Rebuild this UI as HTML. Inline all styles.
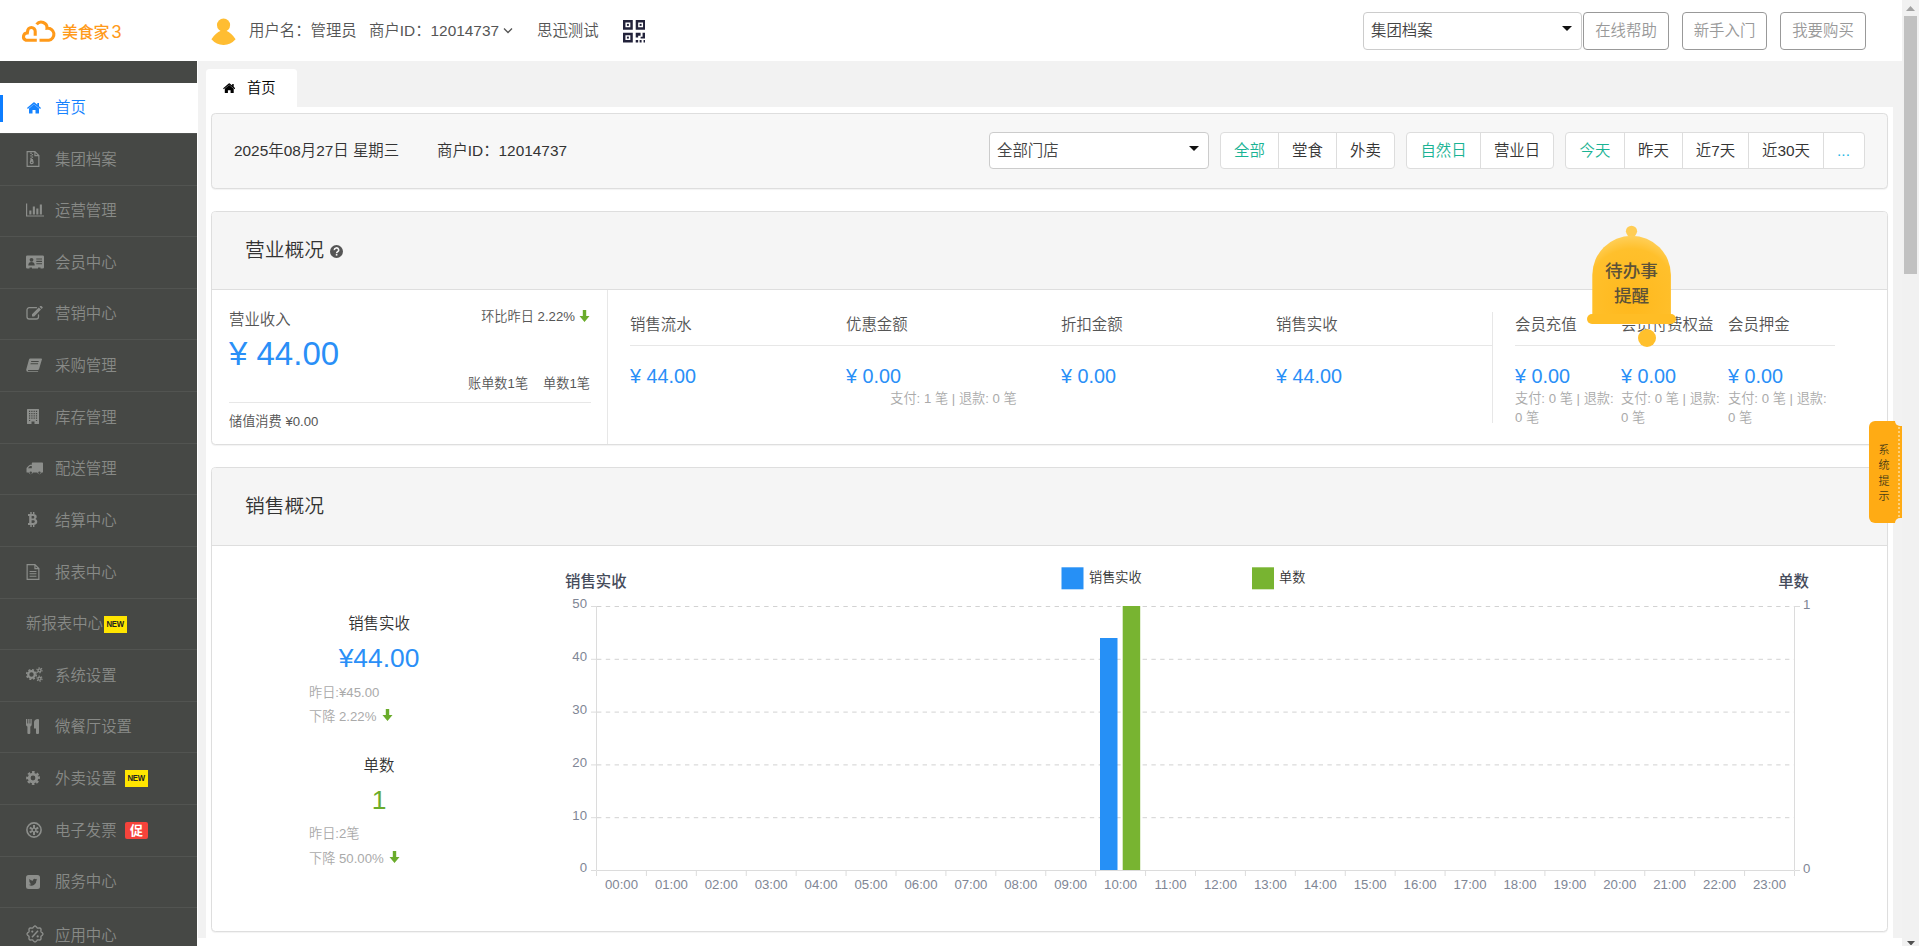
<!DOCTYPE html>
<html lang="zh-CN">
<head>
<meta charset="utf-8">
<title>美食家3</title>
<style>
*{box-sizing:border-box;margin:0;padding:0}
html,body{width:1919px;height:946px;overflow:hidden;background:#f2f2f2}
body{font-family:"Liberation Sans","Noto Sans CJK SC",sans-serif;font-size:14px;font-weight:350;color:#333;position:relative}
.abs{position:absolute}
svg{display:block}
/* header */
#hdr{position:absolute;left:0;top:0;width:1902px;height:61px;background:#fff}
#hdr .t{position:absolute;top:19.500px;height:22px;line-height:22px;font-size:15.4px;color:#555;white-space:nowrap}
.sel{position:absolute;border:1px solid #ccc;border-radius:4px;background:#fff;font-size:15.4px;color:#444;padding-left:7px;white-space:nowrap}
.sel:after{content:"";position:absolute;right:9px;top:13px;border:5px solid transparent;border-top:5px solid #111;border-bottom:0}
.hbtn{position:absolute;top:12px;height:38px;line-height:36px;border:1px solid #999;border-radius:4px;color:#999;font-size:15.4px;text-align:center;background:#fff}
/* sidebar */
#side{position:absolute;left:0;top:61px;width:197px;height:885px;background:#464845;overflow:hidden}
#side .it{position:absolute;left:0;width:197px;height:52px;border-top:1px solid #525451;color:#888a87;font-size:15.4px;line-height:51px;white-space:nowrap}
#side .it .ic{position:absolute;left:26px;top:17px;width:17px;height:17px}
#side .it .tx{position:absolute;left:55px;top:0}
#side .it.act{background:#fff;color:#1583ff;border-top:0;height:50px;line-height:50px}
.badge{position:absolute;top:17px;width:23px;height:17px;line-height:17px;font-size:9px;text-align:center;background:#ffe500;color:#222;font-weight:bold;letter-spacing:-.3px}
.badge i{display:inline-block;font-style:normal;transform:scaleX(.86)}
.badge.cu{background:#f5433b;color:#fff;font-size:13px;border-radius:2px;letter-spacing:0}
/* scrollbar */
#sb{position:absolute;left:1902px;top:0;width:17px;height:946px;background:#f1f1f1}
#sb .th{position:absolute;left:2px;top:16px;width:13px;height:258px;background:#c1c1c1}
/* content */
#white{position:absolute;left:206px;top:107px;width:1687px;height:839px;background:#fff}
#tab{position:absolute;left:206px;top:69px;width:91px;height:39px;background:#fff;border-radius:3.500px 3.500px 0 0;font-size:14.300px;color:#000;line-height:39px}
.panel{position:absolute;left:211px;width:1677px;border:1px solid #dedede;border-radius:4.400px;background:#fff;overflow:hidden;box-shadow:0 1px 1px rgba(0,0,0,.05)}
.phead{position:absolute;left:0;top:0;width:100%;height:78px;background:#f5f5f5;border-bottom:1px solid #dedede}
.phead .ttl{position:absolute;left:33px;top:23px;font-size:19.8px;line-height:30px;color:#333;white-space:nowrap}
.bg{position:absolute;top:132px;height:37px;border:1px solid #ddd;border-radius:4px;background:#fff;display:flex;overflow:hidden}
.bg span{display:block;height:35px;line-height:35px;text-align:center;font-size:15.4px;color:#333;border-left:1px solid #ddd}
.bg span:first-child{border-left:0}
.bg span.on{color:#1ab394}
.lbl{position:absolute;font-size:15.4px;color:#555;white-space:nowrap;line-height:20px}
.val{position:absolute;font-size:19.8px;color:#2a8ff7;white-space:nowrap;line-height:26px}
.sub{position:absolute;font-size:13.2px;color:#aaa;line-height:19px;white-space:nowrap}
.hr{position:absolute;height:1px;background:#e7e7e7}
</style>
</head>
<body>

<!-- HEADER -->
<div id="hdr">
  <svg class="abs" style="left:0;top:0" width="60" height="61" viewBox="0 0 60 61" fill="none" stroke="#ff9a1a" stroke-width="3.100"><path d="M36.800 40.200H26A3.700 3.700 0 0 1 27.300 33L27.600 31.300A3.700 3.700 0 0 1 35.200 31.300V35.800"/><path d="M36.600 24.400A5.800 5.800 0 0 1 47 28.300A6 6 0 1 1 48.800 40.200H39.500"/></svg>
  <div class="abs" style="left:62px;top:20px;font-size:16px;line-height:24px;color:#ff9a1a;font-weight:500;white-space:nowrap;letter-spacing:-.2px">美食家<span style="font-size:18px;margin-left:2px;font-weight:normal">3</span></div>
  <svg class="abs" style="left:210px;top:18px" width="28" height="28" viewBox="0 0 28 28"><circle cx="13.550" cy="7.100" r="6.600" fill="#ffbd32"/><path d="M10.900 12.800Q5.500 15 1.400 21.200Q6.500 27 13.600 26.900Q20.500 27 25.600 21.200Q21.500 15 16.200 12.800z" fill="#ffbd32"/></svg>
  <div class="t" style="left:249px">用户名：管理员</div>
  <div class="t" style="left:369px">商户ID：12014737</div>
  <svg class="abs" style="left:503px;top:27px" width="10" height="7" viewBox="0 0 10 7"><path d="M1 1.500l4 4 4-4" fill="none" stroke="#555" stroke-width="1.300"/></svg>
  <div class="t" style="left:537px">思迅测试</div>
  <svg class="abs" style="left:622.500px;top:20px" width="22.500" height="22.500" viewBox="0 0 23 23" fill="#22223a"><path d="M0 0h10v10H0zM2.500 2.500v5h5v-5zM13 0h10v10H13zM15.500 2.500v5h5v-5zM0 13h10v10H0zM2.500 15.500v5h5v-5z" fill-rule="evenodd"/><rect x="4" y="4" width="2" height="2"/><rect x="17" y="4" width="2" height="2"/><rect x="4" y="17" width="2" height="2"/><path d="M13 13h5v3h-2.500v2H13zM20 13h3v6h-5v-2h2zM13 20.500h2.500V23H13zM17 20.500h2V23h-2zM21 20.500h2V23h-2z"/></svg>
  <div class="sel" style="left:1363px;top:12px;width:219px;height:38px;line-height:36px">集团档案</div>
  <div class="hbtn" style="left:1583px;width:86px">在线帮助</div>
  <div class="hbtn" style="left:1682px;width:85px">新手入门</div>
  <div class="hbtn" style="left:1780px;width:86px">我要购买</div>
</div>

<!-- SIDEBAR -->
<div id="side">
  <div class="it act" style="top:22px"><div class="abs" style="left:0;top:12px;width:3px;height:27px;background:#0d7dff"></div>
    <svg class="ic" style="left:27px;top:19px;width:14px;height:12px" viewBox="0 0 14 12"><path d="M7 2.300L2 6.500V11a.5.500 0 0 0 .5.500H5.500V8h3v3.500h3A.5.500 0 0 0 12 11V6.500zM13.800 5.800l-1.800-1.500V1h-1.700v1.800L7.600.5a1 1 0 0 0-1.200 0L.2 5.800a.3.300 0 0 0 0 .4l.5.600a.3.300 0 0 0 .4 0L7 1.900l5.900 4.900a.3.300 0 0 0 .4 0l.5-.6a.3.300 0 0 0 0-.4z" fill="#1583ff"/></svg>
    <span class="tx">首页</span></div>
  <div class="it" style="top:72px;height:52px;line-height:51px"><svg class="abs" style="left:26px;top:17px" width="14" height="16" viewBox="0 0 13 15"><path d="M1 .6h7.300l3.700 3.700V14.400H1z M8.300 .6v3.700H12" fill="none" stroke="#8c8e8b" stroke-width="1.100"/><path d="M4 1.500h1.300v1.200H4zM5.300 2.700h1.300v1.200H5.300zM4 3.900h1.300v1.200H4zM5.300 5.100h1.300v1.200H5.300zM4 6.300h1.300v1.200H4z" fill="#8c8e8b"/><path d="M4.200 7.600h2.200l.8 3.200a1.900 1.700 0 0 1-3.800 0zM4.500 10.600a.8.600 0 0 0 1.600 0 .8.600 0 0 0-1.600 0z" fill="#8c8e8b" fill-rule="evenodd"/></svg><span class="tx">集团档案</span></div>
  <div class="it" style="top:124px;height:51px;line-height:50px"><svg class="abs" style="left:26px;top:17px" width="18" height="14" viewBox="0 0 18 14"><path d="M.6 .5V13H18" fill="none" stroke="#8c8e8b" stroke-width="1.200"/><path d="M3.300 7.500h2.100V11.500H3.300zM6.800 3.500h2.100v8H6.800zM10.300 5.500h2.100v6h-2.100zM13.800 1.500h2.100v10h-2.100z" fill="#8c8e8b"/></svg><span class="tx">运营管理</span></div>
  <div class="it" style="top:175px;height:52px;line-height:51px"><svg class="abs" style="left:26px;top:18px" width="18" height="14" viewBox="0 0 18 14"><path d="M1.300 .5h15.400A1.300 1.300 0 0 1 18 1.800v10.400a1.300 1.300 0 0 1-1.300 1.300H14.500v-1h-2.500v1H6v-1H3.500v1H1.300A1.300 1.300 0 0 1 0 12.200V1.800A1.300 1.300 0 0 1 1.300 .5z" fill="#8c8e8b"/><circle cx="5.500" cy="4.800" r="1.900" fill="#464845"/><path d="M2.300 10.500c0-2.500 1.200-3.500 3.200-3.500s3.200 1 3.200 3.500z" fill="#464845"/><path d="M10.300 3.400h5.700v1.100h-5.700zM10.300 5.800h5.700v1.100h-5.700zM10.300 8.200h5.700v1.100h-5.700z" fill="#464845"/></svg><span class="tx">会员中心</span></div>
  <div class="it" style="top:227px;height:51px;line-height:50px"><svg class="abs" style="left:26px;top:17px" width="17" height="14" viewBox="0 0 17 14"><path d="M10.500 1.700H3.200A2.200 2.200 0 0 0 1 3.900v6.900A2.200 2.200 0 0 0 3.200 13h7.100a2.200 2.200 0 0 0 2.200-2.200V9" fill="none" stroke="#8c8e8b" stroke-width="1.300" stroke-linecap="round"/><path d="M6 8.200L12.800 1.400l2.200 2.200L8.200 10.400H6zM13.500 .7l.8-.8a.7.700 0 0 1 1 0l1.200 1.200a.7.700 0 0 1 0 1l-.8.800z" fill="#8c8e8b"/></svg><span class="tx">营销中心</span></div>
  <div class="it" style="top:278px;height:52px;line-height:51px"><svg class="abs" style="left:26px;top:18px" width="16" height="14" viewBox="0 0 16 14"><path d="M4.200 .5H15.200a.8.800 0 0 1 .7 1.100L13 11.200a1.200 1.200 0 0 1-1.100.8H2.500c-.5 0-.7.300-.5.700.2.400.6.500 1 .5h9.300l-.4.800H2.500A2.300 2.300 0 0 1 .3 11.200L3 1.400A1.300 1.300 0 0 1 4.200 .5zM5.300 3l-.3 1h7.500l.3-1zM4.700 5.200l-.3 1h7.500l.3-1z" fill="#8c8e8b" fill-rule="evenodd"/></svg><span class="tx">采购管理</span></div>
  <div class="it" style="top:330px;height:52px;line-height:51px"><svg class="abs" style="left:27px;top:17px" width="12" height="15" viewBox="0 0 12 15"><path d="M.5 0h11a.5.500 0 0 1 .5.500V14.500a.5.500 0 0 1-.5.500H7.500v-2.500h-3V15H.5a.5.500 0 0 1-.5-.5V.5A.5.500 0 0 1 .5 0z" fill="#8c8e8b"/><path d="M2 1.700h1.200v1.200H2zM4.300 1.700h1.200v1.200H4.300zM6.600 1.700h1.200v1.200H6.600zM8.900 1.700h1.200v1.200H8.900zM2 4h1.200v1.200H2zM4.300 4h1.200v1.200H4.300zM6.600 4h1.200v1.200H6.600zM8.900 4h1.200v1.200H8.900zM2 6.300h1.200v1.200H2zM4.300 6.300h1.200v1.200H4.300zM6.600 6.300h1.200v1.200H6.600zM8.900 6.300h1.200v1.200H8.900zM2 8.600h1.200v1.200H2zM4.300 8.600h1.200v1.200H4.300zM6.600 8.600h1.200v1.200H6.600zM8.900 8.600h1.200v1.200H8.900zM2 10.900h1.200v1.200H2zM8.900 10.900h1.200v1.200H8.900z" fill="#464845"/></svg><span class="tx">库存管理</span></div>
  <div class="it" style="top:382px;height:51px;line-height:50px"><svg class="abs" style="left:26px;top:18px" width="17" height="13" viewBox="0 0 17 13"><path d="M6.500 .5H16.300a.7.700 0 0 1 .7.700V10a.6.600 0 0 1-.6.600H15.600a2.200 2.200 0 0 1-4.300 0H6.900a2.200 2.200 0 0 1-4.300 0H1.100A.6.600 0 0 1 .5 10V6.500a1.500 1.500 0 0 1 .4-1L3.200 3.200a1.300 1.300 0 0 1 .9-.4H5.800V1.200A.7.700 0 0 1 6.500 .5zM2 6.300H5.800V4H4.300a.5.500 0 0 0-.3.100L2.100 6a.4.400 0 0 0-.1.300z" fill="#8c8e8b" fill-rule="evenodd"/><circle cx="4.750" cy="10.800" r="1.250" fill="#464845"/><circle cx="13.450" cy="10.800" r="1.250" fill="#464845"/><circle cx="4.750" cy="10.800" r="1.200" fill="#8c8e8b" opacity=".0"/></svg><span class="tx">配送管理</span></div>
  <div class="it" style="top:433px;height:52px;line-height:51px"><svg class="abs" style="left:27px;top:17px" width="11" height="15" viewBox="0 0 11 15"><path d="M1 2h5.200c2.300 0 3.500 1 3.500 2.700 0 1.200-.6 2-1.600 2.400 1.400.3 2.200 1.300 2.200 2.700 0 2-1.400 3.200-3.900 3.200H1v-2h1.200V4H1zM4.600 4v2.500h1.300c.9 0 1.400-.5 1.400-1.300S6.800 4 5.900 4zM4.600 8.300V11h1.600c1 0 1.600-.5 1.600-1.400s-.6-1.300-1.600-1.300z" fill="#8c8e8b" fill-rule="evenodd"/><path d="M3.300 0h1.400v2.500H3.300zM6 0h1.400v2.500H6zM3.300 12.500h1.400V15H3.300zM6 12.500h1.400V15H6z" fill="#8c8e8b"/></svg><span class="tx">结算中心</span></div>
  <div class="it" style="top:485px;height:52px;line-height:51px"><svg class="abs" style="left:26px;top:17px" width="14" height="16" viewBox="0 0 13 15"><path d="M1 .6h7.300l3.700 3.700V14.400H1z M8.300 .6v3.700H12" fill="none" stroke="#8c8e8b" stroke-width="1.100"/><path d="M3.300 6.500h6.400v1H3.300zM3.300 8.700h6.400v1H3.300zM3.300 10.900h6.400v1H3.300z" fill="#8c8e8b"/></svg><span class="tx">报表中心</span></div>
  <div class="it" style="top:537px;height:51px;line-height:50px"><span class="tx" style="left:26px">新报表中心</span><span class="badge" style="left:104px"><i>NEW</i></span></div>
  <div class="it" style="top:588px;height:52px;line-height:51px"><svg class="abs" style="left:26px;top:17px" width="17" height="15" viewBox="0 0 17 15"><circle cx="5.500" cy="7.500" r="3.300" fill="none" stroke="#8c8e8b" stroke-width="2.200"/><circle cx="5.500" cy="7.500" r="4.800" fill="none" stroke="#8c8e8b" stroke-width="1.600" stroke-dasharray="2 1.770"/><circle cx="13.500" cy="3.300" r="1.500" fill="none" stroke="#8c8e8b" stroke-width="1.300"/><circle cx="13.500" cy="3.300" r="2.600" fill="none" stroke="#8c8e8b" stroke-width="1.100" stroke-dasharray="1.300 1.420"/><circle cx="13.500" cy="11.700" r="1.500" fill="none" stroke="#8c8e8b" stroke-width="1.300"/><circle cx="13.500" cy="11.700" r="2.600" fill="none" stroke="#8c8e8b" stroke-width="1.100" stroke-dasharray="1.300 1.420"/></svg><span class="tx">系统设置</span></div>
  <div class="it" style="top:640px;height:51px;line-height:50px"><svg class="abs" style="left:26px;top:17px" width="13" height="15" viewBox="0 0 13 15"><path d="M0 0h1.300v4.500h.9V0h1.300v4.500h.9V0h1.300v5.500c0 1-.6 1.600-1.400 2V14a1 1 0 0 1-1 1h-.9a1 1 0 0 1-1-1V7.500C.6 7.100 0 6.500 0 5.500zM12 0a1 1 0 0 1 1 1V14a1 1 0 0 1-1 1h-1a1 1 0 0 1-1-1V9.500H8.500a.5.500 0 0 1-.5-.5V3.500C8 1.500 9.500 0 12 0z" fill="#8c8e8b"/></svg><span class="tx">微餐厅设置</span></div>
  <div class="it" style="top:691px;height:52px;line-height:51px"><svg class="abs" style="left:26px;top:18px" width="14" height="14" viewBox="0 0 14 14"><circle cx="7" cy="7" r="3.800" fill="none" stroke="#8c8e8b" stroke-width="2.800"/><circle cx="7" cy="7" r="5.800" fill="none" stroke="#8c8e8b" stroke-width="2.200" stroke-dasharray="2.500 2.055" transform="rotate(-16 7 7)"/></svg><span class="tx">外卖设置</span><span class="badge" style="left:125px"><i>NEW</i></span></div>
  <div class="it" style="top:743px;height:52px;line-height:51px"><svg class="abs" style="left:26px;top:17px" width="16" height="16" viewBox="0 0 16 16"><circle cx="8" cy="8" r="7.100" fill="none" stroke="#8c8e8b" stroke-width="1.600"/><path d="M8 3.100v9.800M3.750 5.550l8.500 4.900M12.250 5.550l-8.500 4.900" stroke="#8c8e8b" stroke-width="2" fill="none"/><circle cx="8" cy="8" r="1.200" fill="#464845"/></svg><span class="tx">电子发票</span><span class="badge cu" style="left:125px">促</span></div>
  <div class="it" style="top:795px;height:51px;line-height:50px"><svg class="abs" style="left:26px;top:18px" width="14" height="14" viewBox="0 0 14 14"><rect x="0" y="0" width="14" height="14" rx="2.500" fill="#8c8e8b"/><path d="M11.300 4.500c-.3.150-.65.250-1 .3.350-.2.650-.55.750-.95-.35.200-.7.350-1.100.4A1.750 1.750 0 0 0 6.950 5.800 4.900 4.900 0 0 1 3.400 4 1.750 1.750 0 0 0 3.950 6.300c-.3 0-.55-.1-.8-.2 0 .85.600 1.550 1.400 1.700-.25.050-.5.100-.8.050.2.700.85 1.200 1.600 1.200A3.500 3.500 0 0 1 2.800 9.800 4.900 4.900 0 0 0 10.400 5.500c.35-.25.650-.6.900-1z" fill="#464845"/></svg><span class="tx">服务中心</span></div>
  <div class="it" style="top:846px;height:52px;line-height:55px"><svg class="abs" style="left:26px;top:17px" width="18" height="18" viewBox="0 0 18 18"><path d="M9.0 1.0L9.5 1.2L10.0 1.5L10.4 1.9L10.8 2.4L11.1 2.8L11.5 3.0L11.9 3.1L12.4 3.1L13.0 3.0L13.6 3.0L14.2 3.1L14.6 3.4L14.9 3.8L15.0 4.4L15.0 5.0L14.9 5.6L14.9 6.1L15.0 6.5L15.2 6.9L15.6 7.2L16.1 7.6L16.5 8.0L16.8 8.5L16.9 9.0L16.8 9.5L16.5 10.0L16.1 10.4L15.6 10.8L15.2 11.1L15.0 11.5L14.9 11.9L14.9 12.4L15.0 13.0L15.0 13.6L14.9 14.2L14.6 14.6L14.2 14.9L13.6 15.0L13.0 15.0L12.4 14.9L11.9 14.9L11.5 15.0L11.1 15.2L10.8 15.6L10.4 16.1L10.0 16.5L9.5 16.8L9.0 16.9L8.5 16.8L8.0 16.5L7.6 16.1L7.2 15.6L6.9 15.2L6.5 15.0L6.1 14.9L5.6 14.9L5.0 15.0L4.4 15.0L3.8 14.9L3.4 14.6L3.1 14.2L3.0 13.6L3.0 13.0L3.1 12.4L3.1 11.9L3.0 11.5L2.8 11.1L2.4 10.8L1.9 10.4L1.5 10.0L1.2 9.5L1.0 9.0L1.2 8.5L1.5 8.0L1.9 7.6L2.4 7.2L2.8 6.9L3.0 6.5L3.1 6.1L3.1 5.6L3.0 5.0L3.0 4.4L3.1 3.8L3.4 3.4L3.8 3.1L4.4 3.0L5.0 3.0L5.6 3.1L6.1 3.1L6.5 3.0L6.9 2.8L7.2 2.4L7.6 1.9L8.0 1.5L8.5 1.2z" fill="none" stroke="#8c8e8b" stroke-width="1.400" stroke-linejoin="round"/><path d="M6 12.200l6-6.400" stroke="#8c8e8b" stroke-width="1.500" fill="none"/><circle cx="6.300" cy="6.600" r="1.100" fill="#8c8e8b"/><circle cx="11.700" cy="11.400" r="1.100" fill="#8c8e8b"/></svg><span class="tx">应用中心</span></div>
</div>

<!-- SCROLLBAR -->
<div id="sb"><div class="th"></div>
  <svg class="abs" style="left:4px;top:6px" width="9" height="5" viewBox="0 0 9 5"><path d="M0 5L4.500 0 9 5z" fill="#a3a3a3"/></svg>
  <svg class="abs" style="left:4.500px;top:940.500px" width="8" height="4.500" viewBox="0 0 9 5"><path d="M0 0L4.500 5 9 0z" fill="#505050"/></svg>
</div>

<!-- TAB + WHITE AREA -->
<div id="tab">
  <svg class="abs" style="left:16.500px;top:13.700px" width="12.500" height="10.700" viewBox="0 0 14 12"><path d="M7 2.300L2 6.500V11a.5.500 0 0 0 .5.500H5.500V8h3v3.500h3A.5.500 0 0 0 12 11V6.500zM13.800 5.800l-1.800-1.500V1h-1.700v1.800L7.600.5a1 1 0 0 0-1.200 0L.2 5.800a.3.300 0 0 0 0 .4l.5.600a.3.300 0 0 0 .4 0L7 1.900l5.900 4.900a.3.300 0 0 0 .4 0l.5-.6a.3.300 0 0 0 0-.4z" fill="#000"/></svg>
  <span class="abs" style="left:41px;top:0">首页</span>
</div>
<div id="white"></div>
<div class="abs" style="left:197px;top:938px;width:1705px;height:8px;background:#fff"></div>
<div class="abs" style="left:197px;top:61px;width:1px;height:885px;background:#fff"></div>

<!-- FILTER PANEL -->
<div class="panel" style="top:113px;height:76px;background:#f7f7f7"></div>
<div class="lbl" style="left:234px;top:141px;color:#333">2025年08月27日 星期三</div>
<div class="lbl" style="left:437px;top:141px;color:#333">商户ID：12014737</div>
<div class="sel" style="left:989px;top:132px;width:220px;height:37px;line-height:35px">全部门店</div>
<div class="bg" style="left:1220px;width:175px"><span class="on" style="width:57px">全部</span><span style="width:58px">堂食</span><span style="width:58px">外卖</span></div>
<div class="bg" style="left:1406px;width:148px"><span class="on" style="width:73px">自然日</span><span style="width:73px">营业日</span></div>
<div class="bg" style="left:1565px;width:300px"><span class="on" style="width:58px">今天</span><span style="width:58px">昨天</span><span style="width:66px">近7天</span><span style="width:75px">近30天</span><span style="width:40px;color:#23b7e5">...</span></div>

<!-- OVERVIEW PANEL -->
<div class="panel" style="top:211px;height:234px">
  <div class="phead"><div class="ttl">营业概况</div>
    <svg class="abs" style="left:118px;top:33px" width="13" height="13" viewBox="0 0 13 13"><circle cx="6.500" cy="6.500" r="6.500" fill="#555"/><path d="M4.300 5.100a2.200 2.100 0 1 1 3.300 1.700c-.7.400-1 .7-1 1.400" fill="none" stroke="#f5f5f5" stroke-width="1.600"/><rect x="5.800" y="9" width="1.600" height="1.600" fill="#f5f5f5"/></svg>
  </div>
  <div class="abs" style="left:395px;top:78px;width:1px;height:156px;background:#e7e7e7"></div>
</div>
<div class="lbl" style="left:229px;top:310px">营业收入</div>
<div class="lbl" style="left:380px;top:307px;width:195px;text-align:right;font-size:13.2px">环比昨日 2.22%</div>
<svg class="abs arr" style="left:579px;top:310px" width="11" height="12" viewBox="0 0 11 12"><path d="M3.800 0h3.400v6h3.300L5.500 12 .5 6h3.300z" fill="#6aac2b"/></svg>
<div class="abs" style="left:229px;top:334px;font-size:33px;line-height:40px;color:#2a8ff7;white-space:nowrap">¥ 44.00</div>
<div class="lbl" style="left:380px;top:374px;width:210px;text-align:right;font-size:13.2px">账单数1笔<span style="margin-left:15px">单数1笔</span></div>
<div class="hr" style="left:229px;top:402px;width:362px"></div>
<div class="lbl" style="left:229px;top:412px;font-size:13.2px">储值消费 ¥0.00</div>

<div class="lbl" style="left:630px;top:315px">销售流水</div>
<div class="lbl" style="left:846px;top:315px">优惠金额</div>
<div class="lbl" style="left:1061px;top:315px">折扣金额</div>
<div class="lbl" style="left:1276px;top:315px">销售实收</div>
<div class="hr" style="left:630px;top:345px;width:862px"></div>
<div class="val" style="left:630px;top:363px">¥ 44.00</div>
<div class="val" style="left:846px;top:363px">¥ 0.00</div>
<div class="val" style="left:1061px;top:363px">¥ 0.00</div>
<div class="val" style="left:1276px;top:363px">¥ 44.00</div>
<div class="sub" style="left:846px;top:389px;width:215px;text-align:center">支付: 1 笔 | 退款: 0 笔</div>
<div class="abs" style="left:1492px;top:312px;width:1px;height:111px;background:#e7e7e7"></div>
<div class="lbl" style="left:1515px;top:315px">会员充值</div>
<div class="lbl" style="left:1621px;top:315px">会员付费权益</div>
<div class="lbl" style="left:1728px;top:315px">会员押金</div>
<div class="hr" style="left:1515px;top:345px;width:320px"></div>
<div class="val" style="left:1515px;top:363px">¥ 0.00</div>
<div class="val" style="left:1621px;top:363px">¥ 0.00</div>
<div class="val" style="left:1728px;top:363px">¥ 0.00</div>
<div class="sub" style="left:1515px;top:389px">支付: 0 笔 | 退款:<br>0 笔</div>
<div class="sub" style="left:1621px;top:389px">支付: 0 笔 | 退款:<br>0 笔</div>
<div class="sub" style="left:1728px;top:389px">支付: 0 笔 | 退款:<br>0 笔</div>

<!-- SALES PANEL -->
<div class="panel" style="top:467px;height:465px">
  <div class="phead"><div class="ttl">销售概况</div></div>
</div>


<div class="lbl" style="left:279px;top:614px;width:200px;text-align:center;color:#333">销售实收</div>
<div class="abs" style="left:279px;top:641px;width:200px;text-align:center;font-size:26.4px;line-height:34px;color:#2a8ff7">¥44.00</div>
<div class="sub" style="left:309px;top:683px">昨日:¥45.00</div>
<div class="sub" style="left:309px;top:707px;font-size:13.2px">下降 2.22%</div>
<svg class="abs" style="left:382px;top:709px" width="11" height="12" viewBox="0 0 11 12"><path d="M3.800 0h3.400v6h3.300L5.500 12 .5 6h3.300z" fill="#6aac2b"/></svg>
<div class="lbl" style="left:279px;top:756px;width:200px;text-align:center;color:#333">单数</div>
<div class="abs" style="left:279px;top:783px;width:200px;text-align:center;font-size:26.4px;line-height:34px;color:#6aac2b">1</div>
<div class="sub" style="left:309px;top:824px">昨日:2笔</div>
<div class="sub" style="left:309px;top:849px;font-size:13.2px">下降 50.00%</div>
<svg class="abs" style="left:389px;top:851px" width="11" height="12" viewBox="0 0 11 12"><path d="M3.800 0h3.400v6h3.300L5.500 12 .5 6h3.300z" fill="#6aac2b"/></svg>
<svg class="abs" style="left:0;top:0" width="1902" height="946" viewBox="0 0 1902 946" font-family="Liberation Sans, Noto Sans CJK SC, sans-serif">
<line x1="597" y1="817.7" x2="1794" y2="817.7" stroke="#d2d2d2" stroke-width="1" stroke-dasharray="4.400 4.400"/>
<line x1="597" y1="764.9" x2="1794" y2="764.9" stroke="#d2d2d2" stroke-width="1" stroke-dasharray="4.400 4.400"/>
<line x1="597" y1="712.1" x2="1794" y2="712.1" stroke="#d2d2d2" stroke-width="1" stroke-dasharray="4.400 4.400"/>
<line x1="597" y1="659.3" x2="1794" y2="659.3" stroke="#d2d2d2" stroke-width="1" stroke-dasharray="4.400 4.400"/>
<line x1="597" y1="606.5" x2="1794" y2="606.5" stroke="#d2d2d2" stroke-width="1" stroke-dasharray="4.400 4.400"/>
<path d="M596.5 606V870.5H1794.5V606" fill="none" stroke="#dcdcdc" stroke-width="1"/>
<line x1="591" y1="870.5" x2="596" y2="870.5" stroke="#dcdcdc"/>
<text x="587" y="872.3" font-size="13.200" fill="#808695" text-anchor="end">0</text>
<line x1="591" y1="817.7" x2="596" y2="817.7" stroke="#dcdcdc"/>
<text x="587" y="819.5" font-size="13.200" fill="#808695" text-anchor="end">10</text>
<line x1="591" y1="764.9" x2="596" y2="764.9" stroke="#dcdcdc"/>
<text x="587" y="766.7" font-size="13.200" fill="#808695" text-anchor="end">20</text>
<line x1="591" y1="712.1" x2="596" y2="712.1" stroke="#dcdcdc"/>
<text x="587" y="713.9" font-size="13.200" fill="#808695" text-anchor="end">30</text>
<line x1="591" y1="659.3" x2="596" y2="659.3" stroke="#dcdcdc"/>
<text x="587" y="661.1" font-size="13.200" fill="#808695" text-anchor="end">40</text>
<line x1="591" y1="606.5" x2="596" y2="606.5" stroke="#dcdcdc"/>
<text x="587" y="608.3" font-size="13.200" fill="#808695" text-anchor="end">50</text>
<line x1="1795" y1="606.5" x2="1800" y2="606.5" stroke="#dcdcdc"/>
<text x="1803" y="608.8" font-size="13.200" fill="#808695">1</text>
<line x1="1795" y1="870.5" x2="1800" y2="870.5" stroke="#dcdcdc"/>
<text x="1803" y="872.8" font-size="13.200" fill="#808695">0</text>
<line x1="596.50" y1="871" x2="596.50" y2="876" stroke="#dcdcdc"/>
<line x1="646.42" y1="871" x2="646.42" y2="876" stroke="#dcdcdc"/>
<line x1="696.33" y1="871" x2="696.33" y2="876" stroke="#dcdcdc"/>
<line x1="746.25" y1="871" x2="746.25" y2="876" stroke="#dcdcdc"/>
<line x1="796.17" y1="871" x2="796.17" y2="876" stroke="#dcdcdc"/>
<line x1="846.08" y1="871" x2="846.08" y2="876" stroke="#dcdcdc"/>
<line x1="896.00" y1="871" x2="896.00" y2="876" stroke="#dcdcdc"/>
<line x1="945.92" y1="871" x2="945.92" y2="876" stroke="#dcdcdc"/>
<line x1="995.83" y1="871" x2="995.83" y2="876" stroke="#dcdcdc"/>
<line x1="1045.75" y1="871" x2="1045.75" y2="876" stroke="#dcdcdc"/>
<line x1="1095.67" y1="871" x2="1095.67" y2="876" stroke="#dcdcdc"/>
<line x1="1145.58" y1="871" x2="1145.58" y2="876" stroke="#dcdcdc"/>
<line x1="1195.50" y1="871" x2="1195.50" y2="876" stroke="#dcdcdc"/>
<line x1="1245.42" y1="871" x2="1245.42" y2="876" stroke="#dcdcdc"/>
<line x1="1295.33" y1="871" x2="1295.33" y2="876" stroke="#dcdcdc"/>
<line x1="1345.25" y1="871" x2="1345.25" y2="876" stroke="#dcdcdc"/>
<line x1="1395.17" y1="871" x2="1395.17" y2="876" stroke="#dcdcdc"/>
<line x1="1445.08" y1="871" x2="1445.08" y2="876" stroke="#dcdcdc"/>
<line x1="1495.00" y1="871" x2="1495.00" y2="876" stroke="#dcdcdc"/>
<line x1="1544.92" y1="871" x2="1544.92" y2="876" stroke="#dcdcdc"/>
<line x1="1594.83" y1="871" x2="1594.83" y2="876" stroke="#dcdcdc"/>
<line x1="1644.75" y1="871" x2="1644.75" y2="876" stroke="#dcdcdc"/>
<line x1="1694.67" y1="871" x2="1694.67" y2="876" stroke="#dcdcdc"/>
<line x1="1744.58" y1="871" x2="1744.58" y2="876" stroke="#dcdcdc"/>
<line x1="1794.50" y1="871" x2="1794.50" y2="876" stroke="#dcdcdc"/>
<text x="621.5" y="889" font-size="13.200" fill="#808695" text-anchor="middle">00:00</text>
<text x="671.4" y="889" font-size="13.200" fill="#808695" text-anchor="middle">01:00</text>
<text x="721.3" y="889" font-size="13.200" fill="#808695" text-anchor="middle">02:00</text>
<text x="771.2" y="889" font-size="13.200" fill="#808695" text-anchor="middle">03:00</text>
<text x="821.1" y="889" font-size="13.200" fill="#808695" text-anchor="middle">04:00</text>
<text x="871.0" y="889" font-size="13.200" fill="#808695" text-anchor="middle">05:00</text>
<text x="921.0" y="889" font-size="13.200" fill="#808695" text-anchor="middle">06:00</text>
<text x="970.9" y="889" font-size="13.200" fill="#808695" text-anchor="middle">07:00</text>
<text x="1020.8" y="889" font-size="13.200" fill="#808695" text-anchor="middle">08:00</text>
<text x="1070.7" y="889" font-size="13.200" fill="#808695" text-anchor="middle">09:00</text>
<text x="1120.6" y="889" font-size="13.200" fill="#808695" text-anchor="middle">10:00</text>
<text x="1170.5" y="889" font-size="13.200" fill="#808695" text-anchor="middle">11:00</text>
<text x="1220.5" y="889" font-size="13.200" fill="#808695" text-anchor="middle">12:00</text>
<text x="1270.4" y="889" font-size="13.200" fill="#808695" text-anchor="middle">13:00</text>
<text x="1320.3" y="889" font-size="13.200" fill="#808695" text-anchor="middle">14:00</text>
<text x="1370.2" y="889" font-size="13.200" fill="#808695" text-anchor="middle">15:00</text>
<text x="1420.1" y="889" font-size="13.200" fill="#808695" text-anchor="middle">16:00</text>
<text x="1470.0" y="889" font-size="13.200" fill="#808695" text-anchor="middle">17:00</text>
<text x="1520.0" y="889" font-size="13.200" fill="#808695" text-anchor="middle">18:00</text>
<text x="1569.9" y="889" font-size="13.200" fill="#808695" text-anchor="middle">19:00</text>
<text x="1619.8" y="889" font-size="13.200" fill="#808695" text-anchor="middle">20:00</text>
<text x="1669.7" y="889" font-size="13.200" fill="#808695" text-anchor="middle">21:00</text>
<text x="1719.6" y="889" font-size="13.200" fill="#808695" text-anchor="middle">22:00</text>
<text x="1769.5" y="889" font-size="13.200" fill="#808695" text-anchor="middle">23:00</text>
<rect x="1100" y="638" width="17.500" height="232" fill="#2690f6"/>
<rect x="1122.700" y="606" width="17.500" height="264" fill="#78b431"/>
<rect x="1061.500" y="567.300" width="22" height="22" fill="#2690f6"/><text x="1089" y="582" font-size="13.200" fill="#333">销售实收</text>
<rect x="1252" y="567.300" width="22" height="22" fill="#78b431"/><text x="1279" y="582" font-size="13.200" fill="#333">单数</text>
<text x="565" y="587" font-size="15.400" font-weight="500" fill="#464c5b">销售实收</text>
<text x="1809" y="587" font-size="15.400" font-weight="500" fill="#464c5b" text-anchor="end">单数</text>
</svg>
<!-- BELL -->
<svg class="abs" style="left:1585px;top:222px" width="92" height="130" viewBox="0 0 92 130">
<defs><radialGradient id="bg1" cx=".5" cy=".75" r=".8"><stop offset="0" stop-color="#ffb81c"/><stop offset=".75" stop-color="#ffc02c"/><stop offset="1" stop-color="#ffd56a"/></radialGradient></defs>
<circle cx="46.500" cy="9.300" r="5.600" fill="#ffcd55"/>
<path d="M7.300 101V53a39.300 39.300 0 0 1 78.600 0V101z" fill="url(#bg1)"/>
<rect x="2" y="92" width="89" height="10" rx="5" fill="#ffbd25"/>
<circle cx="62" cy="116" r="9" fill="#ffc02c"/>
<text x="46.500" y="55" font-size="17.600" font-weight="500" fill="#5d5238" text-anchor="middle" font-family="Liberation Sans, Noto Sans CJK SC, sans-serif">待办事</text>
<text x="46.500" y="79.500" font-size="17.600" font-weight="500" fill="#5d5238" text-anchor="middle" font-family="Liberation Sans, Noto Sans CJK SC, sans-serif">提醒</text>
</svg>
<!-- TIP TAB -->
<div class="abs" style="left:1869px;top:421px;width:33px;height:102px;background:#ffab14;border-radius:6px 0 0 6px"></div>
<div class="abs" style="left:1895px;top:421px;width:7px;height:5px;background:#f2f2f2;border-radius:0 0 0 5px"></div>
<div class="abs" style="left:1895px;top:518px;width:7px;height:5px;background:#f2f2f2;border-radius:5px 0 0 0"></div>
<div class="abs" style="left:1898px;top:427px;width:0;height:90px;border-left:2px dotted #ffd07a"></div>
<div class="abs" style="left:1877px;top:443px;width:14px;font-size:11px;line-height:15.300px;color:#4a3c14;text-align:center">系统提示</div>

</body>
</html>
